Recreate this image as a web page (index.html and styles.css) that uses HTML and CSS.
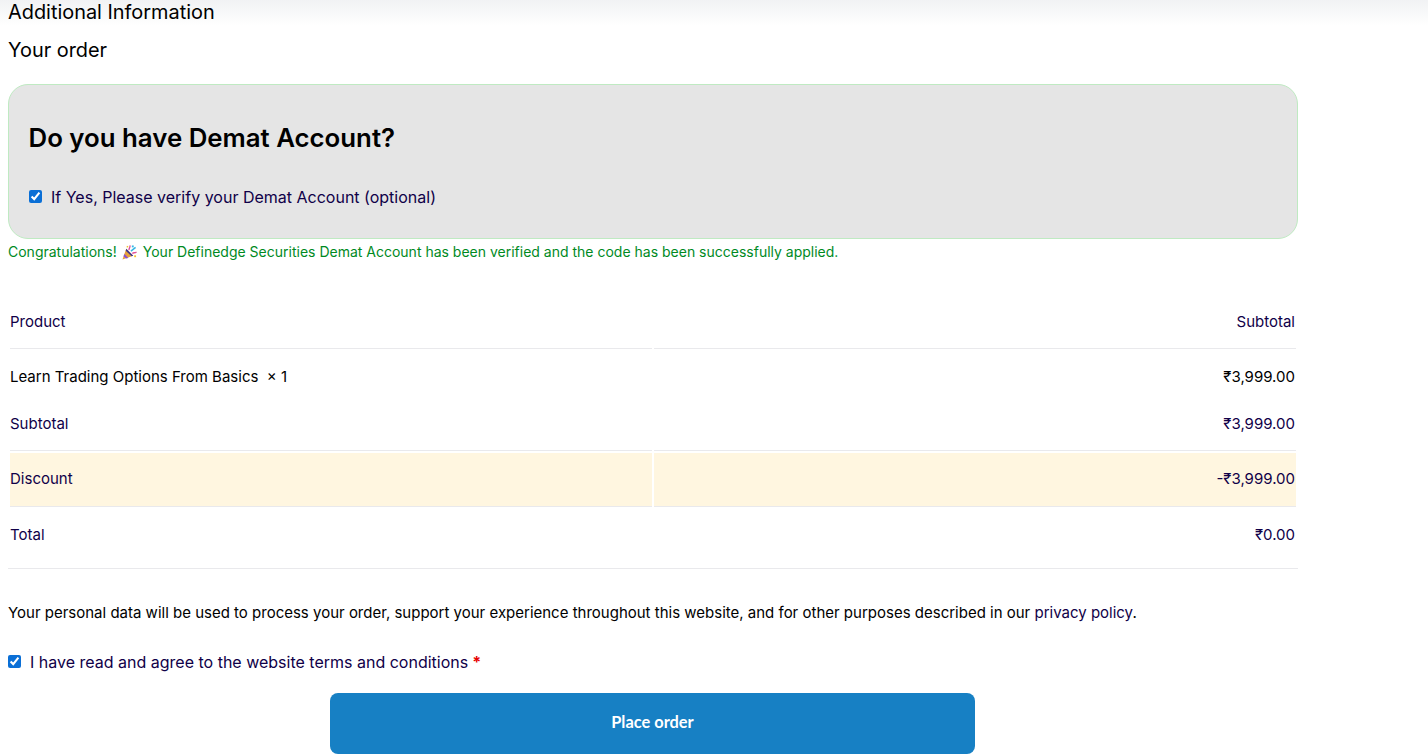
FILE: index.html
```html
<!DOCTYPE html>
<html lang="en">
<head>
<meta charset="utf-8">
<title>Checkout</title>
<link rel="stylesheet" href="styles.css">
</head>
<body>
<div class="top-shadow"></div>
<main class="checkout">
  <h3 class="section-title first">Additional Information</h3>
  <h3 class="section-title order">Your order</h3>
  <section class="demat">
    <h2 class="demat-title">Do you have Demat Account?</h2>
    <label class="demat-check"><input type="checkbox" checked> If Yes, Please verify your Demat Account (optional)</label>
  </section>
  <p class="congrats"><span>Congratulations!</span>
    <svg class="party" viewBox="0 0 16 16" width="15" height="15" aria-hidden="true">
      <path d="M0.5 15.5 L4.5 4 L12 11.5 Z" fill="#e8a33a"/>
      <path d="M2.6 9.6 L6.8 13.8 L4.4 14.4 L1.6 12 Z" fill="#8a4fd0"/>
      <path d="M4.5 4 L12 11.5 L10.2 12 L4 6 Z" fill="#3f3590"/>
      <path d="M7.5 5.5 C7 3.5 9 3 8.5 0.5" stroke="#e0509a" stroke-width="1.4" fill="none"/>
      <path d="M9.5 6.5 L14.5 2.5" stroke="#35b5e5" stroke-width="1.5" fill="none"/>
      <path d="M11 9 C12.5 7.5 13.5 9 15.5 7.5" stroke="#e0509a" stroke-width="1.4" fill="none"/>
      <rect x="10.5" y="0.5" width="2" height="2" fill="#35b5e5"/>
      <rect x="5" y="1" width="1.6" height="1.6" fill="#f2c230"/>
      <rect x="13" y="11" width="2" height="2" fill="#f2c230"/>
    </svg>
    <span class="congrats-rest">Your Definedge Securities Demat Account has been verified and the code has been successfully applied.</span></p>
  <table class="order-table">
    <thead>
      <tr class="row-head"><th>Product</th><th class="amt">Subtotal</th></tr>
    </thead>
    <tbody>
      <tr class="row-item"><td class="item-name">Learn Trading Options From Basics&nbsp; <strong>×&nbsp;1</strong></td><td class="amt">₹3,999.00</td></tr>
    </tbody>
    <tfoot>
      <tr class="row-sub"><td>Subtotal</td><td class="amt">₹3,999.00</td></tr>
      <tr class="row-discount"><td>Discount</td><td class="amt">-₹3,999.00</td></tr>
      <tr class="row-total"><td>Total</td><td class="amt">₹0.00</td></tr>
    </tfoot>
  </table>
  <p class="privacy">Your personal data will be used to process your order, support your experience throughout this website, and for other purposes described in our <a href="#">privacy policy</a>.</p>
  <label class="terms"><input type="checkbox" checked> <span>I have read and agree to the website terms and conditions</span> <b class="req">*</b></label>
  <div class="actions"><button class="place" type="button">Place order</button></div>
</main>
</body>
</html>
```
FILE: styles.css
```css
* { box-sizing: border-box; }
html, body { height: 755px; overflow: hidden; }
body {
  margin: 0;
  background: #fff;
  color: #100048;
  font-family: Inter, "Liberation Sans", sans-serif;
  font-size: 15px;
  position: relative;
}
.top-shadow {
  position: absolute;
  top: 0; left: 0; right: 0;
  height: 26px;
  background: linear-gradient(#f1f2f4, #fff);
}
.checkout { position: relative; width: 1290px; margin-left: 8px; }
.section-title { margin: 0; font-size: 19.9px; font-weight: 400; color: #000; line-height: 24px; }
.order { margin-top: 14px; }
.demat {
  margin-top: 22px;
  height: 155px;
  background: #e5e5e5;
  border: 1px solid #bfeac2;
  border-radius: 20px;
  padding: 36px 19.5px 0;
}
.demat-title { margin: 0; font-size: 25.8px; line-height: 34px; font-weight: 600; color: #000; }
.demat-check { display: flex; align-items: center; gap: 9px; margin-top: 30px; padding-left: .5px; font-size: 16px; line-height: 24px; }
.demat-check input, .terms input { margin: 0 0 2px; width: 13px; height: 13px; accent-color: #0a6fd6; }
.congrats { margin: 4px 0 0; color: #008a1f; font-size: 14px; line-height: 18px; display: flex; align-items: center; gap: 5px; }
.party { margin: 0 1px 0 0; }
.order-table {
  margin-top: 33px;
  width: 1290px;
  table-layout: fixed;
  border-collapse: separate;
  border-spacing: 2px;
  border-bottom: 1px solid #e9e9ec;
  font-size: 15px;
}
.order-table th, .order-table td {
  padding: 16px 0 0;
  font-weight: 400;
  text-align: left;
  vertical-align: top;
  line-height: 20px;
}
.order-table .amt { text-align: right; padding-right: 1px; }
.row-head th { height: 53px; border-bottom: 1px solid #e9e9ec; }
.row-item td { height: 45px; color: #000; }
.item-name strong { font-weight: 400; }
.row-sub td { height: 53px; border-bottom: 1px solid #e9e9ec; }
.row-discount td { height: 54px; background: #fff6e0; border-bottom: 1px solid #e9e9ec; }
.row-total td { height: 57px; }
.privacy { margin: 35px 0 0; color: #000; font-size: 15px; line-height: 18px; }
.privacy a { color: #100048; text-decoration: none; }
.terms { display: flex; align-items: center; gap: 9px; margin-top: 30px; font-size: 16px; line-height: 20px; }
.req { color: #e60000; font-weight: 700; margin-left: -5px; }
.actions { display: flex; justify-content: center; margin-top: 21px; padding-right: 1px; }
.place {
  width: 645px;
  height: 61px;
  border: 0;
  border-radius: 8px;
  padding: 0 0 5px;
  background: #1780c4;
  color: #fff;
  font-family: Lato, sans-serif;
  font-weight: 700;
  font-size: 16.4px;
}
```
